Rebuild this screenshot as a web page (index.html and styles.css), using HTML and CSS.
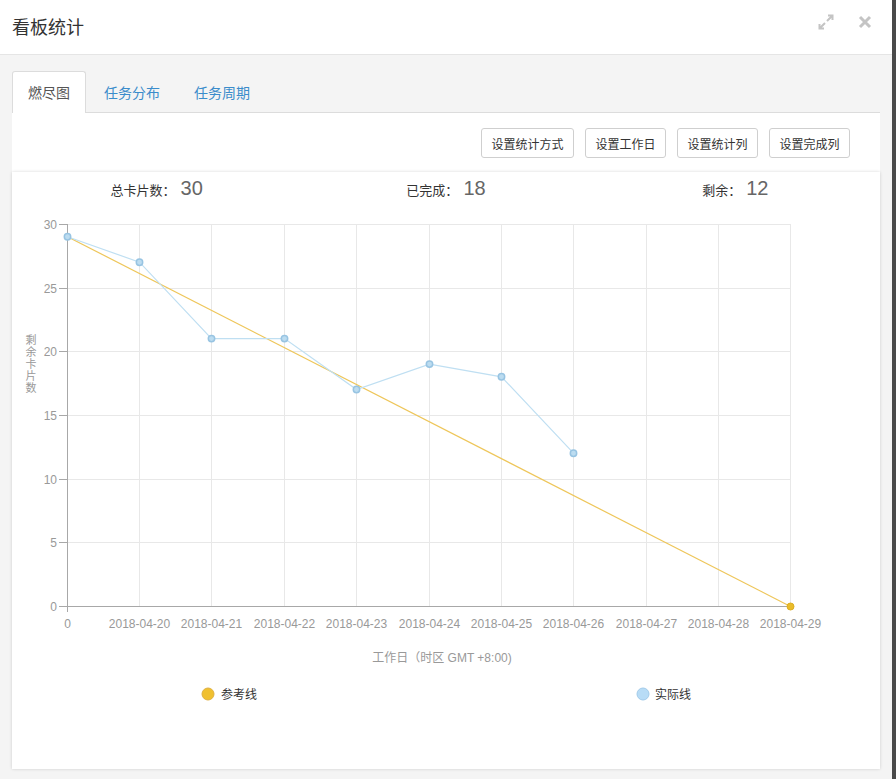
FILE: index.html
```html
<!DOCTYPE html>
<html lang="zh-CN">
<head>
<meta charset="utf-8">
<title>看板统计</title>
<link rel="stylesheet" href="styles.css">
</head>
<body>
<div class="modal">
  <div class="modal-header">
    <h4 class="modal-title">看板统计</h4>
    <div class="header-tools">
      <svg class="icon-expand" width="18" height="18" viewBox="0 0 18 18">
        <path d="M10 8 L15 3 M11 2.5 H15.5 V7 M8 10 L3 15 M2.5 11 V15.5 H7" fill="none" stroke="#c4c4c4" stroke-width="2"/>
      </svg>
      <svg class="icon-close" width="14" height="14" viewBox="0 0 14 14">
        <path d="M2 2 L12 12 M12 2 L2 12" stroke="#c4c4c4" stroke-width="3"/>
      </svg>
    </div>
  </div>
  <div class="modal-body">
    <ul class="tabs">
      <li class="tab active">燃尽图</li>
      <li class="tab">任务分布</li>
      <li class="tab">任务周期</li>
    </ul>
    <div class="pane">
      <div class="toolbar">
        <button class="btn">设置统计方式</button>
        <button class="btn">设置工作日</button>
        <button class="btn">设置统计列</button>
        <button class="btn">设置完成列</button>
      </div>
      <div class="chart-card">
        <div class="stats">
          <div class="stat"><span class="stat-label">总卡片数：</span><span class="stat-num">30</span></div>
          <div class="stat"><span class="stat-label">已完成：</span><span class="stat-num">18</span></div>
          <div class="stat"><span class="stat-label">剩余：</span><span class="stat-num">12</span></div>
        </div>
        <svg class="chart" width="868" height="563" viewBox="0 0 868 563">
          <g class="grid" stroke="#e8e8e8" stroke-width="1">
            <line x1="127.5" y1="18" x2="127.5" y2="400"/>
            <line x1="199.5" y1="18" x2="199.5" y2="400"/>
            <line x1="272.5" y1="18" x2="272.5" y2="400"/>
            <line x1="344.5" y1="18" x2="344.5" y2="400"/>
            <line x1="417.5" y1="18" x2="417.5" y2="400"/>
            <line x1="489.5" y1="18" x2="489.5" y2="400"/>
            <line x1="561.5" y1="18" x2="561.5" y2="400"/>
            <line x1="634.5" y1="18" x2="634.5" y2="400"/>
            <line x1="706.5" y1="18" x2="706.5" y2="400"/>
            <line x1="778.5" y1="18" x2="778.5" y2="400"/>
            <line x1="55" y1="18.5" x2="779" y2="18.5"/>
            <line x1="55" y1="82.5" x2="779" y2="82.5"/>
            <line x1="55" y1="145.5" x2="779" y2="145.5"/>
            <line x1="55" y1="209.5" x2="779" y2="209.5"/>
            <line x1="55" y1="273.5" x2="779" y2="273.5"/>
            <line x1="55" y1="336.5" x2="779" y2="336.5"/>
          </g>
          <g class="axis" stroke="#a8a8a8" stroke-width="1">
            <line x1="55.5" y1="18" x2="55.5" y2="406"/>
            <line x1="47" y1="400.5" x2="779" y2="400.5"/>
            <line x1="47" y1="18.5" x2="55" y2="18.5"/>
            <line x1="47" y1="82.5" x2="55" y2="82.5"/>
            <line x1="47" y1="145.5" x2="55" y2="145.5"/>
            <line x1="47" y1="209.5" x2="55" y2="209.5"/>
            <line x1="47" y1="273.5" x2="55" y2="273.5"/>
            <line x1="47" y1="336.5" x2="55" y2="336.5"/>
          </g>
          <g class="ylabels" text-anchor="end">
            <text x="45" y="22.5">30</text>
            <text x="45" y="86.5">25</text>
            <text x="45" y="149.5">20</text>
            <text x="45" y="213.5">15</text>
            <text x="45" y="277.5">10</text>
            <text x="45" y="340.5">5</text>
            <text x="45" y="404.5">0</text>
          </g>
          <g class="xlabels" text-anchor="middle">
            <text x="55.5" y="422">0</text>
            <text x="127.5" y="422">2018-04-20</text>
            <text x="199.5" y="422">2018-04-21</text>
            <text x="272.5" y="422">2018-04-22</text>
            <text x="344.5" y="422">2018-04-23</text>
            <text x="417.5" y="422">2018-04-24</text>
            <text x="489.5" y="422">2018-04-25</text>
            <text x="561.5" y="422">2018-04-26</text>
            <text x="634.5" y="422">2018-04-27</text>
            <text x="706.5" y="422">2018-04-28</text>
            <text x="778.5" y="422">2018-04-29</text>
          </g>
          <text class="axis-title y-title" text-anchor="middle"><tspan x="19" y="138">剩</tspan><tspan x="19" dy="12">余</tspan><tspan x="19" dy="12">卡</tspan><tspan x="19" dy="12">片</tspan><tspan x="19" dy="12">数</tspan></text>
          <text class="axis-title" x="430" y="456" text-anchor="middle">工作日（时区 GMT +8:00)</text>
          <polyline points="55.5,30.7 778.5,400.5" fill="none" stroke="#eec65a" stroke-width="1.2"/>
          <polyline points="55.5,30.7 127.5,56.2 199.5,132.6 272.5,132.6 344.5,183.5 417.5,158.1 489.5,170.8 561.5,247.2" fill="none" stroke="#bfdff2" stroke-width="1.2"/>
          <g fill="#bcdcf0" stroke="#98c4e2" stroke-width="1.5">
            <circle cx="55.5" cy="30.7" r="3.2"/>
            <circle cx="127.5" cy="56.2" r="3.2"/>
            <circle cx="199.5" cy="132.6" r="3.2"/>
            <circle cx="272.5" cy="132.6" r="3.2"/>
            <circle cx="344.5" cy="183.5" r="3.2"/>
            <circle cx="417.5" cy="158.1" r="3.2"/>
            <circle cx="489.5" cy="170.8" r="3.2"/>
            <circle cx="561.5" cy="247.2" r="3.2"/>
          </g>
          <circle cx="778.5" cy="400.5" r="3.5" fill="#eabc2a" stroke="#dcae22" stroke-width="1"/>
          <g class="legend">
            <circle cx="196" cy="488" r="6" fill="#f0c030" stroke="#dfb040" stroke-width="1"/>
            <text x="209" y="492.5">参考线</text>
            <circle cx="631" cy="488" r="6" fill="#b8dcf6" stroke="#a2cbea" stroke-width="1"/>
            <text x="643" y="492.5">实际线</text>
          </g>
        </svg>
      </div>
    </div>
  </div>
</div>
</body>
</html>
```
FILE: styles.css
```css
* {
  box-sizing: border-box;
}

html, body {
  margin: 0;
  padding: 0;
}

body {
  background: #4a4a4a;
  font-family: "Liberation Sans", "Noto Sans CJK SC", sans-serif;
  color: #333;
}

.modal {
  width: 892px;
  height: 779px;
  background: #f4f4f4;
  display: flex;
  flex-direction: column;
}

.modal-header {
  height: 55px;
  flex: none;
  background: #fff;
  border-bottom: 1px solid #e5e5e5;
  display: flex;
  align-items: center;
  justify-content: space-between;
  padding: 0 20px 0 12px;
}

.modal-title {
  margin: 0;
  font-size: 18px;
  font-weight: normal;
  color: #333;
  font-family: "Noto Sans CJK SC", sans-serif;
  line-height: 1;
  padding-bottom: 2px;
}

.header-tools {
  display: flex;
  align-items: center;
  gap: 23px;
  padding-bottom: 11px;
}

.icon-expand, .icon-close {
  display: block;
}

.modal-body {
  flex: 1;
  display: flex;
  flex-direction: column;
  padding: 16px 12px 10px 12px;
}

.tabs {
  list-style: none;
  margin: 0;
  padding: 0;
  display: flex;
  height: 41px;
  flex: none;
  position: relative;
  z-index: 1;
}

.tab {
  height: 42px;
  line-height: 40px;
  padding: 0 15px;
  margin-right: 2px;
  border: 1px solid transparent;
  border-bottom: none;
  border-radius: 3px 3px 0 0;
  font-size: 14px;
  color: #3b8ccb;
  font-family: "Noto Sans CJK SC", sans-serif;
}

.tab.active {
  background: #fff;
  border-color: #dcdcdc;
  color: #555;
}

.pane {
  flex: 1;
  background: #fff;
  border-top: 1px solid #dcdcdc;
  display: flex;
  flex-direction: column;
}

.toolbar {
  display: flex;
  justify-content: flex-end;
  gap: 11px;
  padding: 15px 30px 0 0;
  flex: none;
}

.btn {
  height: 30px;
  padding: 0 9.5px;
  background: #fff;
  border: 1px solid #cfcfcf;
  border-radius: 3px;
  font-size: 12px;
  color: #333;
  font-family: "Noto Sans CJK SC", sans-serif;
}

.chart-card {
  flex: 1;
  margin-top: 14px;
  background: #fff;
  box-shadow: 0 0 3px rgba(0, 0, 0, 0.16);
  display: flex;
  flex-direction: column;
}

.stats {
  display: grid;
  grid-template-columns: 1fr 1fr 1fr;
  height: 34px;
  align-items: center;
  flex: none;
}

.stat {
  text-align: center;
  white-space: nowrap;
  padding-bottom: 2px;
}

.stat-label {
  font-size: 13px;
  color: #333;
  font-family: "Noto Sans CJK SC", sans-serif;
}

.stat-num {
  font-size: 20px;
  color: #666;
  margin-left: 5px;
}

.chart {
  display: block;
}

.chart text {
  font-family: "Liberation Sans", "Noto Sans CJK SC", sans-serif;
  font-size: 12px;
  fill: #999;
}

.chart .y-title {
  font-size: 11px;
}

.chart .legend text {
  fill: #333;
}
```
